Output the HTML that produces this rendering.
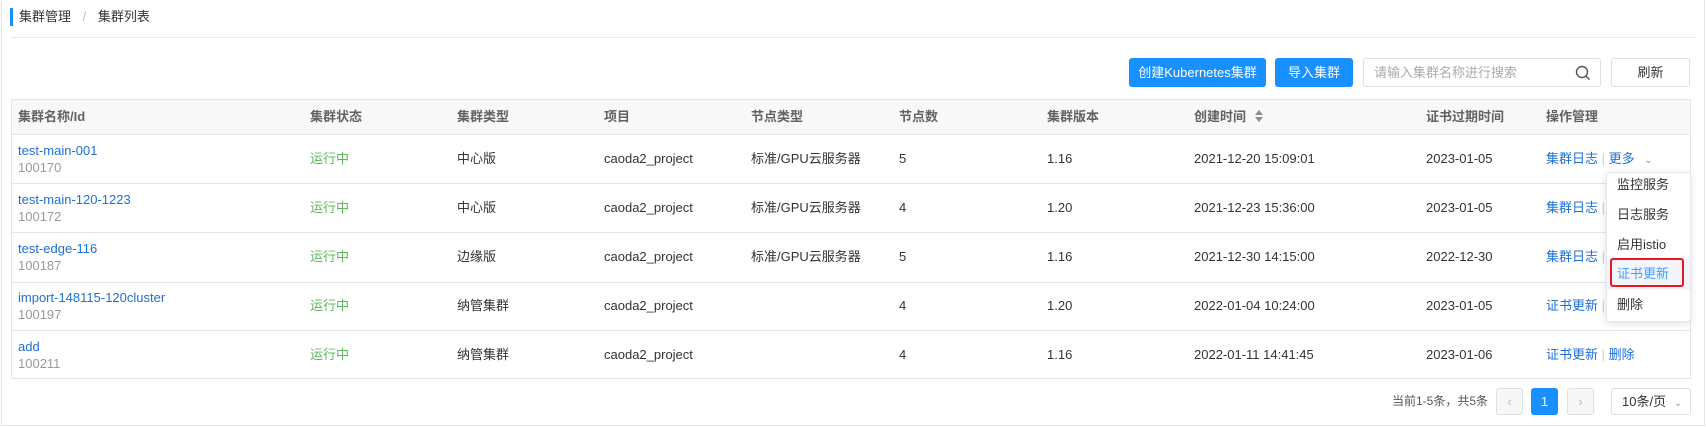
<!DOCTYPE html>
<html><head><meta charset="utf-8"><style>
*{margin:0;padding:0;box-sizing:border-box}
body{width:1706px;height:427px;background:#fff;font-family:"Liberation Sans","Noto Sans CJK SC",sans-serif;font-size:13px;line-height:18px;color:#333;position:relative;overflow:hidden}
.a{position:absolute;white-space:nowrap;line-height:18px}
.frame{left:1px;top:-2px;width:1704px;height:428px;border:1px solid #e6e6e6}
.btn{height:29px;line-height:29px;text-align:center;border-radius:3px;font-size:13px}
.blue{background:#1890ff;color:#fff}
.th{top:99px;height:35px;line-height:35px;color:#606266;font-weight:bold}
.hl{position:absolute;left:11px;width:1680px;height:1px;background:#e2e5ea}
.lk{color:#1e6fd9}
.g{color:#5cb85c}
.id{color:#999}
.menu{left:1606px;top:172px;width:85px;height:150px;background:#fff;border:1px solid #e4e7ed;box-shadow:0 2px 8px rgba(0,0,0,.12);border-radius:3px}
.mi{position:absolute;left:10px;font-size:13px;color:#333;line-height:18px}
.r1{top:150px}.r2{top:199px}.r3{top:248px}.r4{top:297px}.r5{top:346px}
</style></head><body>
<div class="a frame"></div>
<div class="a" style="left:10px;top:8px;width:3px;height:18px;background:#1890ff"></div>
<div class="a" style="left:19px;top:8px;color:#333">集群管理 <span style="color:#bbb;margin:0 8px">/</span> 集群列表</div>
<div class="a" style="left:10px;top:37px;width:1686px;height:1px;background:#e8e8e8"></div>

<div class="a btn blue" style="left:1129px;top:58px;width:137px;line-height:29px">创建Kubernetes集群</div>
<div class="a btn blue" style="left:1275px;top:58px;width:78px;line-height:29px">导入集群</div>
<div class="a" style="left:1363px;top:58px;width:238px;height:29px;border:1px solid #dcdfe6;border-radius:3px;line-height:27px;padding-left:10px;color:#aaa">请输入集群名称进行搜索
<svg style="position:absolute;right:9px;top:6px" width="16" height="16" viewBox="0 0 16 16"><circle cx="7" cy="7" r="5.5" fill="none" stroke="#555" stroke-width="1.4"/><path d="M11 11l3.5 3.5" stroke="#555" stroke-width="1.4"/></svg></div>
<div class="a btn" style="left:1611px;top:58px;width:79px;border:1px solid #dcdfe6;line-height:27px;color:#333">刷新</div>

<div class="a" style="left:11px;top:99px;width:1680px;height:280px;border:1px solid #e2e5ea"></div>
<div class="a" style="left:12px;top:100px;width:1678px;height:34px;background:#f8f8f9"></div>
<div class="hl" style="top:134px"></div>
<div class="hl" style="top:183px"></div>
<div class="hl" style="top:232px"></div>
<div class="hl" style="top:282px"></div>
<div class="hl" style="top:330px"></div>

<div class="a th" style="left:18px;line-height:35px">集群名称/Id</div>
<div class="a th" style="left:310px;line-height:35px">集群状态</div>
<div class="a th" style="left:457px;line-height:35px">集群类型</div>
<div class="a th" style="left:604px;line-height:35px">项目</div>
<div class="a th" style="left:751px;line-height:35px">节点类型</div>
<div class="a th" style="left:899px;line-height:35px">节点数</div>
<div class="a th" style="left:1047px;line-height:35px">集群版本</div>
<div class="a th" style="left:1194px;line-height:35px">创建时间 <svg width="10" height="14" viewBox="0 0 10 14" style="vertical-align:-2px;margin-left:4px"><path d="M5 1L9 6H1z" fill="#8c8c8c"/><path d="M5 13L9 8H1z" fill="#8c8c8c"/></svg></div>
<div class="a th" style="left:1426px;line-height:35px">证书过期时间</div>
<div class="a th" style="left:1546px;line-height:35px">操作管理</div>

<div class="a lk" style="left:18px;top:142px">test-main-001</div><div class="a id" style="left:18px;top:159px">100170</div>
<div class="a lk" style="left:18px;top:191px">test-main-120-1223</div><div class="a id" style="left:18px;top:208px">100172</div>
<div class="a lk" style="left:18px;top:240px">test-edge-116</div><div class="a id" style="left:18px;top:257px">100187</div>
<div class="a lk" style="left:18px;top:289px">import-148115-120cluster</div><div class="a id" style="left:18px;top:306px">100197</div>
<div class="a lk" style="left:18px;top:338px">add</div><div class="a id" style="left:18px;top:355px">100211</div>

<div class="a g r1" style="left:310px">运行中</div>
<div class="a g r2" style="left:310px">运行中</div>
<div class="a g r3" style="left:310px">运行中</div>
<div class="a g r4" style="left:310px">运行中</div>
<div class="a g r5" style="left:310px">运行中</div>

<div class="a r1" style="left:457px">中心版</div>
<div class="a r2" style="left:457px">中心版</div>
<div class="a r3" style="left:457px">边缘版</div>
<div class="a r4" style="left:457px">纳管集群</div>
<div class="a r5" style="left:457px">纳管集群</div>

<div class="a r1" style="left:604px">caoda2_project</div>
<div class="a r2" style="left:604px">caoda2_project</div>
<div class="a r3" style="left:604px">caoda2_project</div>
<div class="a r4" style="left:604px">caoda2_project</div>
<div class="a r5" style="left:604px">caoda2_project</div>

<div class="a r1" style="left:751px">标准/GPU云服务器</div>
<div class="a r2" style="left:751px">标准/GPU云服务器</div>
<div class="a r3" style="left:751px">标准/GPU云服务器</div>

<div class="a r1" style="left:899px">5</div>
<div class="a r2" style="left:899px">4</div>
<div class="a r3" style="left:899px">5</div>
<div class="a r4" style="left:899px">4</div>
<div class="a r5" style="left:899px">4</div>

<div class="a r1" style="left:1047px">1.16</div>
<div class="a r2" style="left:1047px">1.20</div>
<div class="a r3" style="left:1047px">1.16</div>
<div class="a r4" style="left:1047px">1.20</div>
<div class="a r5" style="left:1047px">1.16</div>

<div class="a r1" style="left:1194px">2021-12-20 15:09:01</div>
<div class="a r2" style="left:1194px">2021-12-23 15:36:00</div>
<div class="a r3" style="left:1194px">2021-12-30 14:15:00</div>
<div class="a r4" style="left:1194px">2022-01-04 10:24:00</div>
<div class="a r5" style="left:1194px">2022-01-11 14:41:45</div>

<div class="a r1" style="left:1426px">2023-01-05</div>
<div class="a r2" style="left:1426px">2023-01-05</div>
<div class="a r3" style="left:1426px">2022-12-30</div>
<div class="a r4" style="left:1426px">2023-01-05</div>
<div class="a r5" style="left:1426px">2023-01-06</div>

<div class="a lk r1" style="left:1546px">集群日志 <span style="color:#ccc">|</span> 更多 <span style="color:#999;font-size:10px;margin-left:6px">&#8964;</span></div>
<div class="a lk r2" style="left:1546px">集群日志 <span style="color:#ccc">|</span></div>
<div class="a lk r3" style="left:1546px">集群日志 <span style="color:#ccc">|</span></div>
<div class="a lk r4" style="left:1546px">证书更新 <span style="color:#ccc">|</span></div>
<div class="a lk r5" style="left:1546px">证书更新 <span style="color:#ccc">|</span> 删除</div>

<div class="a menu">
<div class="mi" style="top:3px">监控服务</div>
<div class="mi" style="top:33px">日志服务</div>
<div class="mi" style="top:63px">启用istio</div>
<div style="position:absolute;left:0;top:86px;width:83px;height:31px;background:#f2f6fc"></div>
<div class="mi" style="top:92px;color:#409eff">证书更新</div>
<div style="position:absolute;left:3px;top:85px;width:74px;height:29px;border:2px solid #f0141e;border-radius:3px"></div>
<div class="mi" style="top:123px">删除</div>
</div>

<div class="a" style="right:218px;top:392px;color:#555;font-size:12px">当前1-5条，共5条</div>
<div class="a" style="left:1496px;top:388px;width:27px;height:27px;border:1px solid #dcdfe6;border-radius:3px;background:#f7f7f7;color:#bbb;text-align:center;line-height:25px">&lsaquo;</div>
<div class="a" style="left:1531px;top:388px;width:27px;height:27px;border-radius:3px;background:#1890ff;color:#fff;text-align:center;line-height:27px">1</div>
<div class="a" style="left:1567px;top:388px;width:27px;height:27px;border:1px solid #dcdfe6;border-radius:3px;background:#f7f7f7;color:#bbb;text-align:center;line-height:25px">&rsaquo;</div>
<div class="a" style="left:1611px;top:388px;width:80px;height:27px;border:1px solid #dcdfe6;border-radius:3px;line-height:25px;padding-left:10px;color:#333">10条/页 <span style="color:#999;font-size:10px;margin-left:4px">&#8964;</span></div>
</body></html>
